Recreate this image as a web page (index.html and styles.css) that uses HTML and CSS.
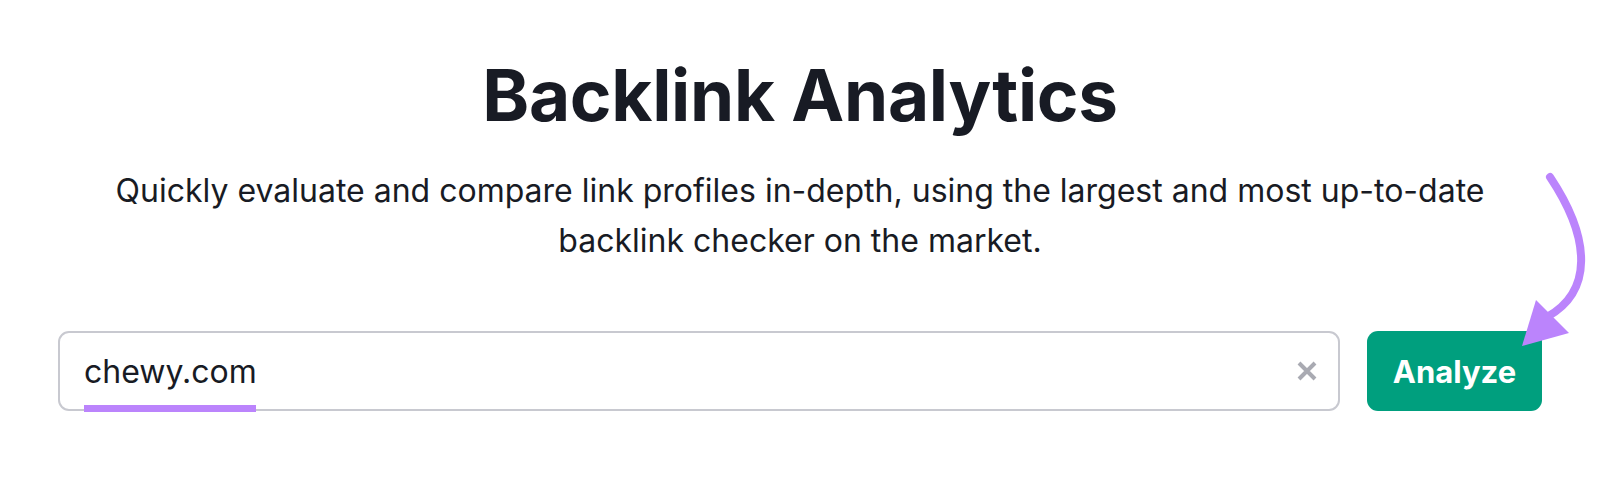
FILE: index.html
```html
<!DOCTYPE html>
<html lang="en">
<head>
<meta charset="utf-8">
<title>Backlink Analytics</title>
<link rel="stylesheet" href="styles.css">
</head>
<body>
<main class="page">
  <h1 class="title">Backlink Analytics</h1>
  <p class="subtitle">Quickly evaluate and compare link profiles in-depth, using the largest and most up-to-date<br>backlink checker on the market.</p>
  <form class="search">
    <div class="field">
      <span class="value">chewy.com</span>
      <svg class="clear" width="22" height="22" viewBox="0 0 22 22" aria-hidden="true">
        <path d="M3 3 L19 19 M19 3 L3 19" stroke="#a9aab2" stroke-width="4" stroke-linecap="butt" fill="none"/>
      </svg>
    </div>
    <button type="button" class="analyze">Analyze</button>
  </form>
  <svg class="arrow" width="90" height="190" viewBox="1500 170 90 190" aria-hidden="true">
    <path d="M1550 177 C 1592 240, 1592 292, 1547 317" stroke="#bb84fc" stroke-width="8" fill="none" stroke-linecap="round"/>
    <polygon points="1522,346 1536,300 1569,333" fill="#bb84fc"/>
  </svg>
</main>
</body>
</html>
```
FILE: styles.css
```css
html, body {
  margin: 0;
  padding: 0;
  background: #ffffff;
}
body {
  font-family: Inter, "Noto Sans", sans-serif;
  color: #181b24;
}
.page {
  position: relative;
  width: 1600px;
  height: 487px;
  display: flex;
  flex-direction: column;
  align-items: center;
  box-sizing: border-box;
  padding-top: 60px;
}
.title {
  margin: 0;
  font-size: 71px;
  line-height: 71px;
  font-weight: 700;
  letter-spacing: -0.3px;
  color: #181b24;
}
.subtitle {
  margin: 35px 0 0;
  font-size: 32px;
  line-height: 50px;
  text-align: center;
  font-weight: 400;
  color: #181b24;
}
.search {
  margin-top: 65px;
  width: 1484px;
  display: flex;
  gap: 27px;
}
.field {
  flex: 1;
  height: 80px;
  box-sizing: border-box;
  border: 2px solid #c8c9d0;
  border-radius: 11px;
  display: flex;
  align-items: center;
  padding: 0 20px 0 24px;
  position: relative;
}
.field::after {
  content: "";
  position: absolute;
  left: 24px;
  bottom: -3px;
  width: 172px;
  height: 7px;
  background: #bb84fc;
}
.value {
  font-size: 32px;
  color: #181b24;
  flex: 1;
}
.clear {
  display: block;
}
.analyze {
  width: 175px;
  height: 80px;
  border: 0;
  border-radius: 11px;
  background: #009f7e;
  color: #ffffff;
  font-family: Inter, "Noto Sans", sans-serif;
  font-size: 31px;
  font-weight: 700;
  padding: 0;
}
.arrow {
  position: absolute;
  left: 1500px;
  top: 170px;
}
```
